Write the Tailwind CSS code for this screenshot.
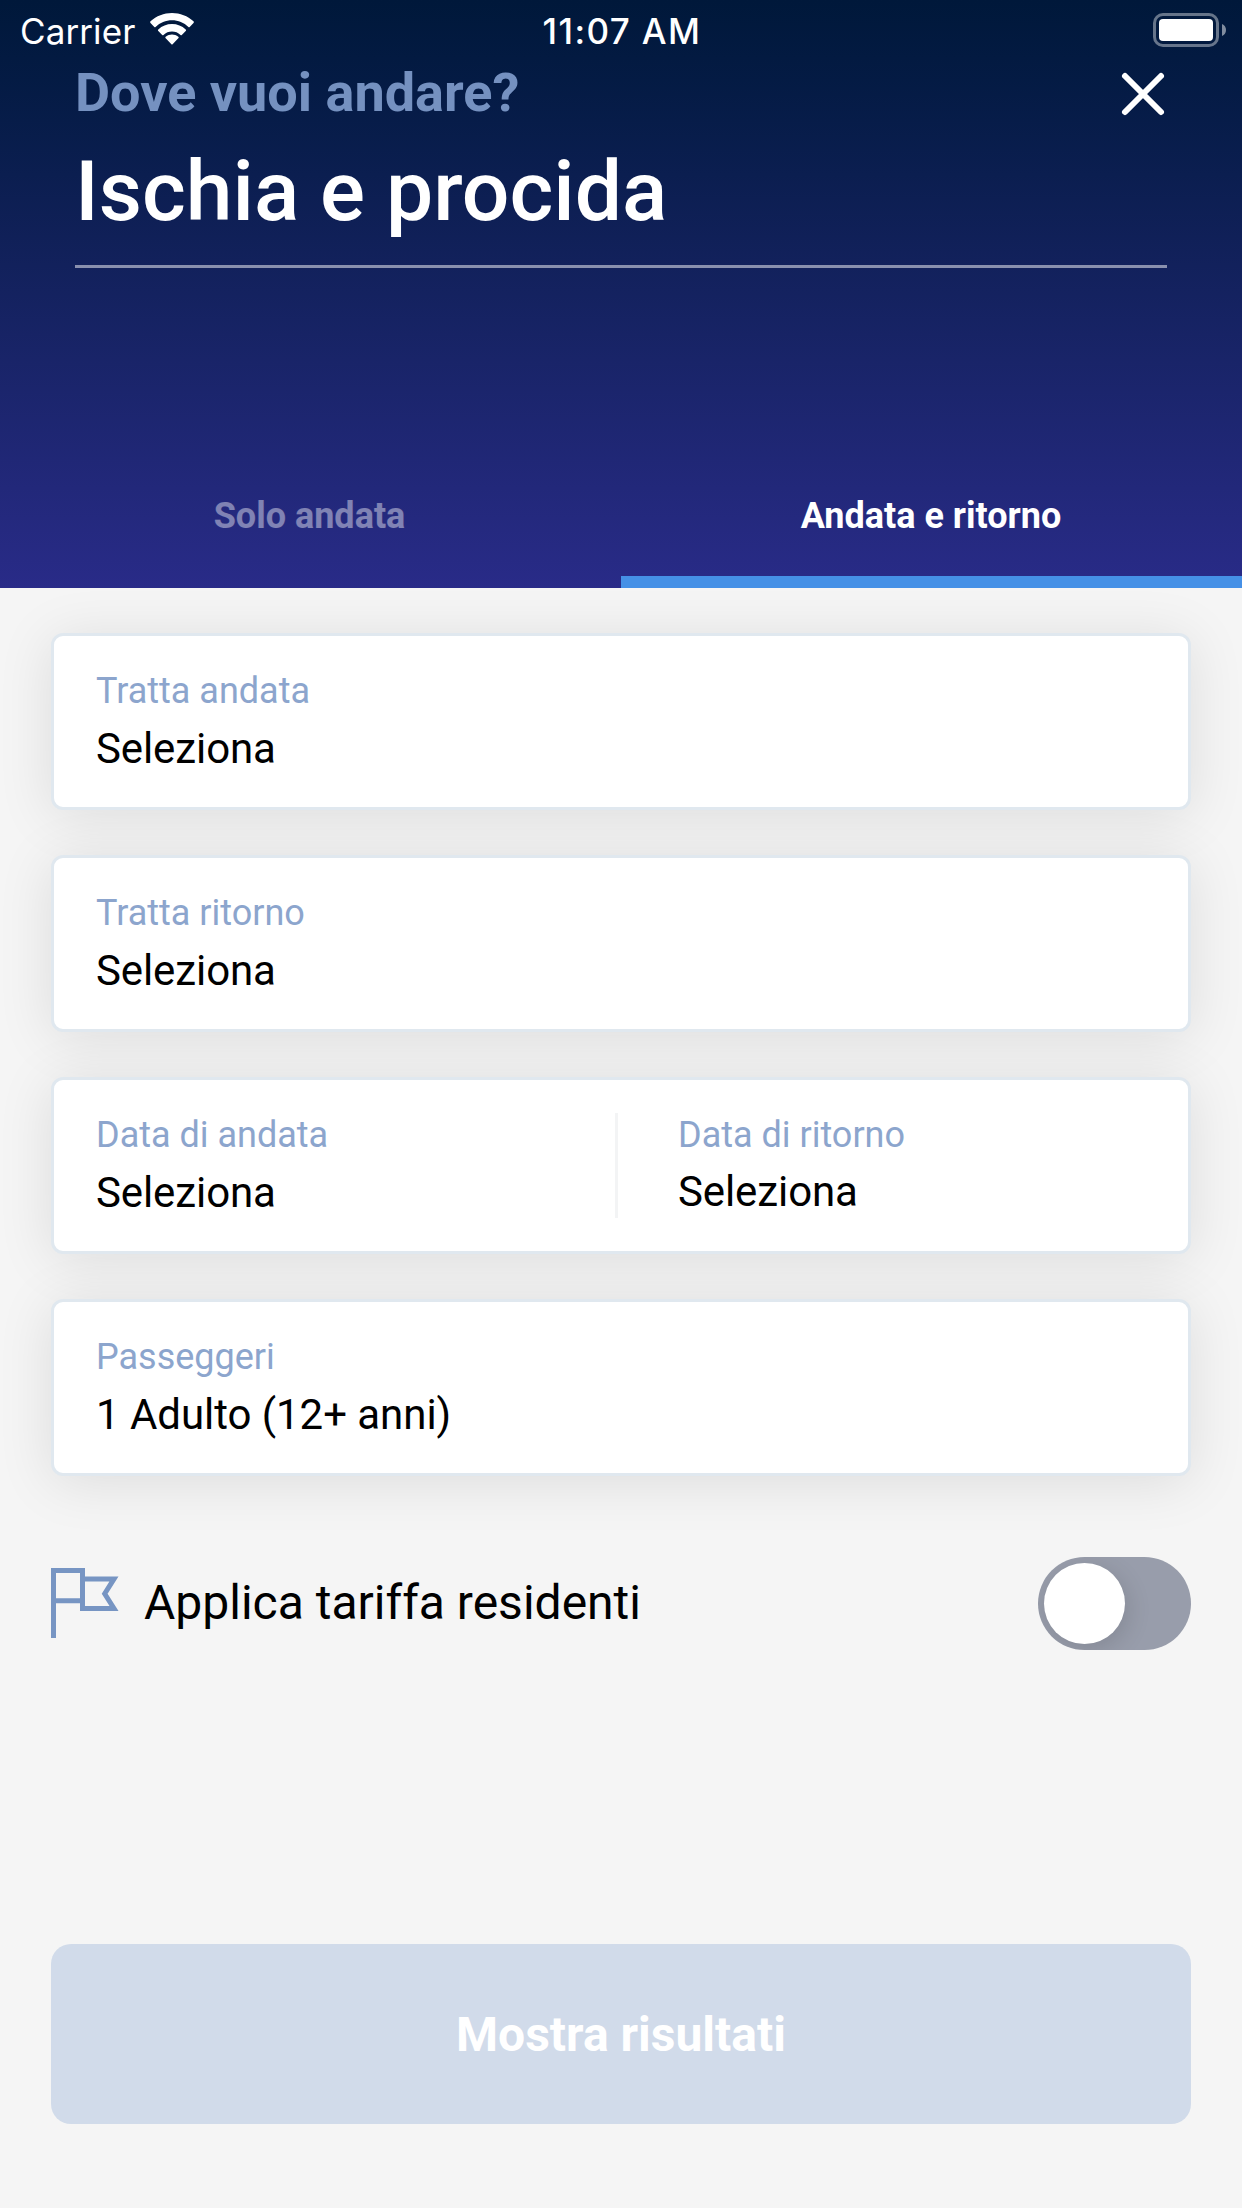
<!DOCTYPE html>
<html lang="it">
<head>
  <meta charset="UTF-8">
  <meta name="viewport" content="width=device-width, initial-scale=1.0">
  <title>Ischia e procida</title>
  <script src="https://cdn.jsdelivr.net/npm/@tailwindcss/browser@4"></script>
</head>
<body class="w-[1242px] h-[2208px] flex flex-col overflow-hidden bg-[#f5f5f5] font-['Roboto',sans-serif] text-black">
  <!-- Header -->
  <header class="h-[588px] shrink-0 flex flex-col bg-linear-to-b from-[#00183a] to-[#292b88] text-white">
    <!-- Status bar -->
    <div class="h-[60px] shrink-0 grid grid-cols-3 items-center px-4 font-['Inter',sans-serif] text-[35px] leading-[60px]">
      <div class="flex items-center gap-[14px] pl-1">
        <span class="w-[115px] pt-[2px] leading-[58px] whitespace-nowrap tracking-[0.1px]">Carrier</span>
        <svg class="w-[46px] h-[34px]" viewBox="0 0 46 34" fill="#fff">
          <path d="M23 7.2c6.200 0 12 2.400 16.400 6.700.4.400.9.400 1.300 0l3.800-3.900c.5-.5.500-1.200 0-1.700C38.700 3 31.100 0 23 0S7.300 3 1.500 8.300c-.5.500-.5 1.200 0 1.700l3.800 3.900c.4.400.9.400 1.300 0C11 9.600 16.800 7.200 23 7.200z"/>
          <path d="M23 18.600c3.200 0 6.200 1.200 8.500 3.300.4.400.9.400 1.300 0l3.900-3.900c.5-.5.500-1.200 0-1.600C33 12.900 28.200 11 23 11S13 12.900 9.300 16.400c-.5.400-.5 1.100 0 1.600l3.900 3.900c.4.400.9.400 1.300 0 2.300-2.100 5.300-3.300 8.500-3.300z"/>
          <path d="M29.300 25.300c.5-.5.500-1.200 0-1.600-3.600-3-9-3-12.600 0-.5.400-.5 1.100 0 1.600l5.700 5.900c.3.400.9.400 1.200 0z"/>
        </svg>
      </div>
      <span class="pt-[2px] pl-[2px] leading-[58px] text-center font-medium whitespace-nowrap tracking-[1.4px]">11:07 AM</span>
      <svg class="justify-self-end w-[73px] h-[34px]" viewBox="0 0 73 34">
        <rect x="1.500" y="1.500" width="63" height="31" rx="8.500" fill="none" stroke="#fff" stroke-opacity=".4" stroke-width="3"/>
        <rect x="6" y="6" width="54" height="22" rx="4" fill="#fff"/>
        <path d="M69 11v12c2.500-1 4-3.300 4-6s-1.500-5-4-6z" fill="#fff" fill-opacity=".5"/>
      </svg>
    </div>

    <div class="mx-[75px] h-[208px] shrink-0 border-b-3 border-white/50">
      <div class="flex items-center justify-between">
        <h2 class="pt-px text-[54px] leading-[64px] font-bold text-[#7591c0]">Dove vuoi andare?</h2>
        <svg class="w-[48px] h-[48px]" viewBox="0 0 48 48" fill="none" stroke="#fff" stroke-width="6" stroke-linecap="round">
          <path d="M6 7l36 36M42 7L6 43"/>
        </svg>
      </div>
      <h1 class="mt-[18px] text-[84px] leading-[98px] font-medium">Ischia e procida</h1>
    </div>

    <!-- Tabs -->
    <div class="mt-auto h-[138px] grid grid-cols-2 text-center text-[36px] leading-[42px] font-bold">
      <div class="pt-[45px] pr-[2px] text-white/42">Solo andata</div>
      <div class="pt-[45px] pr-px border-b-12 border-[#4590e6]">Andata e ritorno</div>
    </div>
  </header>

  <!-- Form -->
  <main class="flex-1 flex flex-col px-[51px] pt-[45px] pb-[84px]">
    <div class="flex flex-col gap-[45px] isolate">
      <div class="h-[177px] px-[42px] pt-[34px] bg-white border-3 border-[#e0e8ef] rounded-xl shadow-[0_6px_56px_rgba(0,0,0,0.1)]">
        <p class="text-[36px] leading-[42px] text-[#8ca5cd]">Tratta andata</p>
        <p class="mt-3 text-[42px] leading-[50px] tracking-[-0.1px]">Seleziona</p>
      </div>
      <div class="h-[177px] px-[42px] pt-[34px] bg-white border-3 border-[#e0e8ef] rounded-xl shadow-[0_6px_56px_rgba(0,0,0,0.1)]">
        <p class="text-[36px] leading-[42px] text-[#8ca5cd]">Tratta ritorno</p>
        <p class="mt-3 text-[42px] leading-[50px] tracking-[-0.1px]">Seleziona</p>
      </div>
      <div class="h-[177px] px-[42px] flex bg-white border-3 border-[#e0e8ef] rounded-xl shadow-[0_6px_56px_rgba(0,0,0,0.1)]">
        <div class="w-[519px] pt-[34px]">
          <p class="text-[36px] leading-[42px] text-[#8ca5cd]">Data di andata</p>
          <p class="mt-3 text-[42px] leading-[50px] tracking-[-0.1px]">Seleziona</p>
        </div>
        <div class="w-[3px] h-[105px] mt-[33px] bg-[#f3f4f5]"></div>
        <div class="pl-[60px] pt-[34px]">
          <p class="text-[36px] leading-[42px] text-[#8ca5cd]">Data di ritorno</p>
          <p class="mt-[11px] text-[42px] leading-[50px] tracking-[-0.1px]">Seleziona</p>
        </div>
      </div>
      <div class="h-[177px] px-[42px] pt-[34px] bg-white border-3 border-[#e0e8ef] rounded-xl shadow-[0_6px_56px_rgba(0,0,0,0.1)]">
        <p class="text-[36px] leading-[42px] text-[#8ca5cd]">Passeggeri</p>
        <p class="mt-3 text-[42px] leading-[50px] tracking-[-0.05px]">1 Adulto (12+ anni)</p>
      </div>
    </div>

    <!-- Resident fare -->
    <div class="mt-[81px] h-[93px] flex items-center">
      <svg class="w-[68px] h-[70px] mb-px" viewBox="0 0 68 70" fill="none" stroke="#7795c3" stroke-width="5">
        <path d="M2.500 70V2.500h29v30.300h-29M31.500 10.900h31.500l-9.300 14.900 9.300 14.700H31.500V30"/>
      </svg>
      <span class="ml-[25px] pb-[2px] text-[48px] leading-[56px]">Applica tariffa residenti</span>
      <div class="ml-auto w-[153px] h-[93px] p-[6px] rounded-full bg-[#989dab] overflow-hidden">
        <div class="size-[81px] rounded-full bg-white shadow-[3px_6px_24px_rgba(0,0,0,0.13)]"></div>
      </div>
    </div>

    <button class="mt-auto h-[180px] pt-[2px] rounded-[20px] bg-[#d1dbea] text-white text-[48px] leading-[56px] font-bold">Mostra risultati</button>
  </main>
</body>
</html>
